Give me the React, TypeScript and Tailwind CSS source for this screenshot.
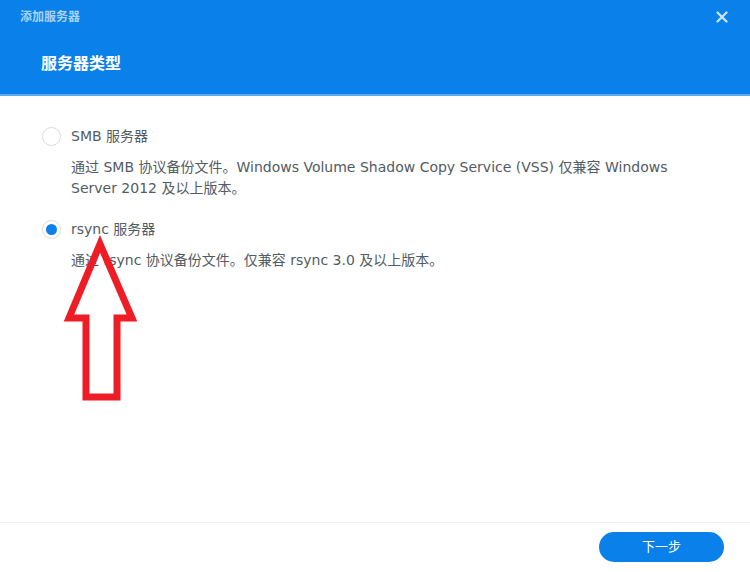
import React, { useState } from 'react';

const font = { fontFamily: '"DejaVu Sans", "Noto Sans CJK SC", sans-serif' };

const options = [
  {
    id: 'smb',
    label: 'SMB 服务器',
    desc: '通过 SMB 协议备份文件。Windows Volume Shadow Copy Service (VSS) 仅兼容 Windows Server 2012 及以上版本。',
  },
  {
    id: 'rsync',
    label: 'rsync 服务器',
    desc: '通过 rsync 协议备份文件。仅兼容 rsync 3.0 及以上版本。',
  },
];

export default function App() {
  const [selected, setSelected] = useState('rsync');

  return (
    <div className="relative w-[750px] h-[572px] bg-white flex flex-col overflow-hidden" style={font}>
      {/* header */}
      <div className="h-[96px] bg-[#0a80ea] border-b-2 border-[#5aaaf2] flex flex-col shrink-0">
        <div className="flex items-center justify-between h-[34px] pl-[20px] pr-[22px]">
          <span className="text-[12px] text-[#a9d2f8] font-bold">添加服务器</span>
          <svg width="12" height="12" viewBox="0 0 12 12" className="text-[#cfe6fb]">
            <path d="M1.5 1.5 L10.5 10.5 M10.5 1.5 L1.5 10.5" stroke="currentColor" strokeWidth="2.2" strokeLinecap="round" />
          </svg>
        </div>
        <div className="pl-[41px] pt-[18px] text-[16px] font-bold text-white">服务器类型</div>
      </div>

      {/* body */}
      <div className="flex-1 pl-[42px] pr-[76px] pt-[28px] flex flex-col gap-[18px]">
        {options.map((o) => {
          const on = selected === o.id;
          return (
            <div key={o.id} className="flex flex-col">
              <label className="flex items-center gap-[10px] cursor-pointer h-[24px]" onClick={() => setSelected(o.id)}>
                <span className="w-[19px] h-[19px] rounded-full border border-[#d6dde5] flex items-center justify-center">
                  {on && <span className="w-[11px] h-[11px] rounded-full bg-[#0a80ea]" />}
                </span>
                <span className="text-[14px] text-[#535b63]">{o.label}</span>
              </label>
              <p className="pl-[29px] pt-[9px] text-[14px] leading-[21px] text-[#535b63]">{o.desc}</p>
            </div>
          );
        })}
      </div>

      {/* footer */}
      <div className="h-[50px] border-t border-[#eef1f4] flex items-center justify-end pr-[26px] shrink-0">
        <button className="w-[125px] h-[30px] rounded-full bg-[#0a80ea] text-white text-[13px] mt-[-2px]">下一步</button>
      </div>

      {/* annotation arrow */}
      <svg className="absolute left-0 top-0 pointer-events-none" width="750" height="572">
        <polygon
          points="100,244 69,318 86,318 86,397 117,397 117,318 132,318"
          fill="none"
          stroke="#ee1c25"
          strokeWidth="7"
          strokeLinejoin="miter"
        />
      </svg>
    </div>
  );
}
